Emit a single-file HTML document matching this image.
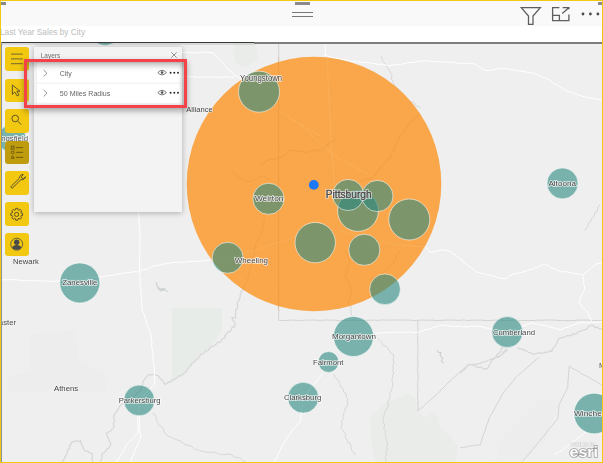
<!DOCTYPE html>
<html><head><meta charset="utf-8">
<style>
html,body{margin:0;padding:0;width:603px;height:463px;overflow:hidden;background:#f2c811;font-family:"Liberation Sans",sans-serif;}
#frame{position:absolute;left:1px;top:1px;width:601px;height:460.5px;background:#fafafa;overflow:hidden;}
#hdr{position:absolute;left:0;top:0;width:601px;height:25px;background:#f9f9f9;}
#title{position:absolute;left:0;top:25px;width:601px;height:16px;background:#fff;}
#title span{position:absolute;left:-1.5px;top:0.5px;font-size:9.2px;color:#bdbdbd;white-space:nowrap;transform-origin:0 0;transform:scaleX(0.9);}
#map{position:absolute;left:0;top:41px;width:601px;height:420px;background:#efefef;overflow:hidden;}
svg{position:absolute;left:0;top:0;}
.btn{position:absolute;left:4px;width:23.5px;height:23.5px;background:#f2c811;border-radius:3px;}
#panel{position:absolute;left:33px;top:46px;width:148px;height:164px;background:#f3f3f3;box-shadow:0 1px 6px rgba(0,0,0,.28);}
.row{position:absolute;left:3px;width:143px;height:19.5px;background:#fff;}
.row span{position:absolute;left:23px;top:5px;font-size:7.5px;color:#555;white-space:nowrap;}
#red{position:absolute;left:23px;top:58px;width:157px;height:43px;border:3px solid #f4424a;box-shadow:0 3px 6px rgba(0,0,0,.32), inset 0 3px 6px rgba(0,0,0,.3);}
.lbl{position:absolute;font-size:8px;color:#555;white-space:nowrap;text-shadow:0 0 1px #fff,0 0 1px #fff,0 0 2px #fff;transform:translate(-50%,-50%);}
</style></head><body>
<div id="frame">
  <div id="hdr">
    <div style="position:absolute;left:0;top:1px;width:5px;height:3px;background:#8a8a8a"></div>
    <div style="position:absolute;left:294px;top:1px;width:15px;height:3px;background:#8a8a8a"></div>
    <div style="position:absolute;left:291px;top:11px;width:21px;height:1px;background:#777"></div>
    <div style="position:absolute;left:291px;top:15px;width:21px;height:1px;background:#777"></div>
    <div style="position:absolute;left:597px;top:1px;width:4px;height:3px;background:#8a8a8a"></div>
  </div>
  
<svg style="position:absolute;left:0;top:0" width="603" height="42" viewBox="1 1 603 42">
  <path d="M521.3,7.6 L540.3,7.6 L533,16 L533,24.3 L528.5,24.3 L528.5,16 Z" fill="none" stroke="#5e5e5e" stroke-width="1.3" stroke-linejoin="miter"/>
  <path d="M559.4,7.6 L552.6,7.6 L552.6,20.6 L568.9,20.6 L568.9,14.4 M562.6,7.6 L568.9,7.6 L568.9,9.2 M552.6,15.4 L559.4,15.4 L559.4,20.6 M562.2,13.6 L568.3,8.2" fill="none" stroke="#5e5e5e" stroke-width="1.3"/>
  <circle cx="583" cy="14" r="1.4" fill="#4a4a4a"/>
  <circle cx="590.4" cy="14" r="1.4" fill="#4a4a4a"/>
  <circle cx="597.9" cy="14" r="1.4" fill="#4a4a4a"/>
</svg>
<div id="title"><span>Last Year Sales by City</span></div>
</div>
<div id="map" style="left:1px;top:42px;width:601px;height:419.5px;">
  <svg width="601" height="420" viewBox="1 42 601 420">
    <!-- map details -->
    <g fill="#e7ebe7" stroke="none" opacity="0.8">
      <path d="M172,308 L222,308 L222,330 L212,346 L198,356 L184,372 L172,384 Z"/>
      <path d="M30,335 L75,330 L78,360 L108,375 L106,392 L80,392 L62,385 L40,392 L8,392 L8,378 L30,370 Z" opacity="0.6"/>
      <path d="M370,418 L378,410 L386,402 L400,398 L408,393 L415,398 L417,410 L425,418 L430,412 L437,416 L440,428 L450,436 L458,446 L456,463 L376,463 L372,448 Z" opacity="0.8"/>
      <path d="M500,440 L540,400 L560,400 L545,440 L520,463 L495,463 Z" opacity="0.6"/>
      <path d="M233,43 L256,43 L258,60 L245,68 L235,62 Z" opacity="0.8"/>
    </g>
<!--LINES-->
<path d="M156,282 L158,287 L161,289 L164,288 L166,290 L168,292 L165,290 L161,291 L158,289 Z" fill="#cfd3d3" stroke="#cfd3d3" stroke-width="0.8"/>
<path d="M437,350 L439,353 L441,352 L440,356 L443,358 L441,361 L444,363" fill="none" stroke="#c9cccc" stroke-width="1"/>
<g fill="none" stroke="#d3d3d3" stroke-width="1"><path d="M278.6,43.0 L278.7,46.0 L278.8,49.0 L278.5,52.0 L278.9,55.1 L278.6,58.1 L278.7,61.1 L278.9,64.1 L278.6,67.1 L278.9,70.1 L278.6,73.1 L278.9,76.2 L278.9,79.2 L278.7,82.2 L278.4,85.2 L278.9,88.2 L278.8,91.2 L278.5,94.2 L278.3,97.3 L278.5,100.3 L278.7,103.3 L278.3,106.3 L278.9,109.3 L278.3,112.3 L278.7,115.3 L278.8,118.4 L278.9,121.4 L278.7,124.4 L278.4,127.4 L278.8,130.4 L278.5,133.4 L278.5,136.4 L278.7,139.5 L278.6,142.5 L278.9,145.5 L278.9,148.5 L278.8,151.5 L278.5,154.5 L278.7,157.5 L278.7,160.6 L278.5,163.6 L278.6,166.6 L278.7,169.6 L278.4,172.6 L278.5,175.6 L278.8,178.6 L278.5,181.7 L278.6,184.7 L278.3,187.7 L278.4,190.7 L278.7,193.7 L278.3,196.7 L278.9,199.7 L278.7,202.7 L278.4,205.8 L278.8,208.8 L278.6,211.8 L278.9,214.8 L278.5,217.8 L278.4,220.8 L278.5,223.8 L278.3,226.9 L278.7,229.9 L278.5,232.9 L278.5,235.9 L278.5,238.9 L278.6,241.9 L278.4,244.9 L278.3,248.0 L278.6,251.0 L278.5,254.0 L278.9,257.0 L278.5,260.0 L278.5,263.0 L278.3,266.0 L278.4,269.1 L278.8,272.1 L278.7,275.1 L278.5,278.1 L278.9,281.1 L278.6,284.1 L278.8,287.1 L278.9,290.2 L278.9,293.2 L278.4,296.2 L278.9,299.2 L278.8,302.2 L278.7,305.2 L278.3,308.2 L278.9,311.3 L278.6,314.3 L278.6,317.3 L278.6,320.3 L281.6,320.6 L284.6,320.5 L287.6,320.6 L290.6,320.1 L293.6,320.2 L296.6,320.2 L299.6,320.6 L302.6,320.6 L305.6,320.1 L308.6,320.1 L311.6,320.1 L314.6,320.1 L317.6,320.3 L320.7,320.4 L323.7,320.1 L326.7,320.0 L329.7,320.2 L332.7,320.2 L335.7,320.3 L338.7,320.6 L341.7,320.4 L344.7,320.3 L347.7,320.4 L350.7,320.4 L353.7,320.0 L356.7,320.6 L359.7,320.5 L362.7,320.6 L365.7,320.5 L368.7,320.2 L371.7,320.2 L374.7,320.0 L377.7,320.4 L380.7,320.0 L383.7,320.0 L386.7,320.1 L389.7,320.1 L392.7,320.2 L395.7,320.0 L398.7,320.0 L401.8,320.1 L404.8,320.0 L407.8,320.2 L410.8,320.0 L413.8,320.6 L416.8,320.4 L419.8,320.1 L422.8,320.1 L425.8,320.2 L428.8,320.2 L431.8,320.0 L434.8,320.5 L437.8,320.6 L440.8,320.3 L443.8,320.3 L446.8,320.0 L449.8,320.0 L452.8,320.2 L455.8,320.1 L458.8,320.5 L461.8,320.1 L464.8,320.0 L467.8,320.6 L470.8,320.3 L473.8,320.1 L476.8,320.3 L479.8,320.0 L482.9,320.3 L485.9,320.6 L488.9,320.6 L491.9,320.4 L494.9,320.1 L497.9,320.2 L500.9,320.1 L503.9,320.5 L506.9,320.3 L509.9,320.5 L512.9,320.2 L515.9,320.1 L518.9,320.5 L521.9,320.6 L524.9,320.5 L527.9,320.5 L530.9,320.5 L533.9,320.5 L536.9,320.1 L539.9,320.3 L542.9,320.2 L545.9,320.0 L548.9,320.0 L551.9,320.1 L554.9,320.1 L557.9,320.4 L560.9,320.6 L564.0,320.3 L567.0,320.6 L570.0,320.6 L573.0,320.6 L576.0,320.2 L579.0,320.1 L582.0,320.1 L585.0,320.1 L588.0,320.1 L591.0,320.4 L594.0,320.6 L597.0,320.5 L600.0,320.3 L603.0,320.3"/><path d="M417.9,320.3 L417.8,323.3 L417.7,326.3 L418.2,329.4 L417.8,332.4 L417.6,335.4 L417.7,338.4 L417.7,341.5 L417.9,344.5 L418.1,347.5 L417.7,350.5 L418.0,353.6 L417.7,356.6 L417.6,359.6 L418.0,362.6 L418.0,365.6 L417.6,368.7 L417.7,371.7 L418.1,374.7 L418.2,377.7 L418.1,380.8 L417.6,383.8 L417.7,386.8 L418.1,389.8 L417.7,392.9 L417.6,395.9 L417.8,398.9 L418.0,401.9 L417.9,405.0 L418.2,408.0 L417.9,411.0 L420.1,408.6 L423.0,406.9 L425.2,404.6 L427.6,402.3 L430.2,400.4 L432.4,398.0 L435.0,396.0 L437.4,393.8 L439.7,391.5 L441.9,389.0 L444.3,386.7 L446.6,384.4 L449.0,382.0 L451.5,379.9 L453.8,377.5 L456.0,375.3 L458.5,373.3 L460.7,371.1 L463.4,369.4 L465.5,367.0 L467.9,365.0 L470.9,364.6 L474.0,364.3 L477.0,364.1 L480.0,363.4 L482.8,362.3 L485.8,361.6 L488.6,360.2 L491.4,359.2 L494.3,358.1 L497.0,356.7 L500.0,356.0 L502.6,354.0 L505.2,351.8 L508.0,350.0"/><path d="M569.1,365.9 L569.2,369.0 L568.5,372.0 L568.7,375.1 L568.3,378.2 L567.9,381.2 L567.9,384.3 L567.7,387.4 L566.4,390.3 L564.8,393.2 L563.4,396.0 L561.8,398.8 L560.8,401.9 L559.1,404.7 L558.7,408.3 L558.5,411.9 L558.1,415.4 L557.6,419.0 L555.4,421.4 L553.5,423.9 L551.4,426.4 L549.3,428.8 L547.2,431.2 L545.4,433.9 L543.3,436.3 L541.3,438.6 L539.5,441.1 L537.5,443.4 L535.5,445.7 L533.7,448.2 L531.8,450.6 L529.8,453.1 L527.8,455.6 L525.5,457.8 L523.6,460.4 L521.7,463.0"/><path d="M569.1,365.9 L571.6,367.7 L574.2,369.3 L577.0,370.4 L579.5,372.1 L582.0,373.9 L584.6,375.4 L587.5,376.5 L590.1,378.0 L592.6,379.8 L595.3,381.1 L597.9,382.8 L600.5,384.2 L603.0,386.0"/><path d="M539.0,357.3 L536.5,359.3 L534.1,361.3 L531.6,363.3 L529.6,365.8 L526.9,367.6 L524.5,369.7 L522.4,372.0 L519.6,373.7 L517.4,376.0 L515.1,378.2 L513.4,381.0 L511.0,383.2 L509.2,385.9 L507.1,388.3 L504.8,390.5 L503.0,393.2 L501.2,396.0 L500.0,399.0 L498.3,401.8 L496.6,404.7 L495.2,407.6 L493.7,410.5 L492.0,413.3 L490.2,416.1 L488.7,419.0 L488.1,422.0 L486.8,424.7 L485.9,427.6 L485.2,430.6 L484.0,433.4 L482.9,436.2 L482.0,439.1 L481.3,442.1 L480.1,444.9 L476.7,445.0 L473.4,445.6 L470.0,446.0 L466.7,447.0 L463.4,447.4 L460.0,447.7"/></g>
<g fill="none" stroke="#d8d8d8" stroke-width="1.3"><path d="M243.0,288.0 L243.0,290.2 L241.0,291.6 L241.1,293.8 L240.0,295.5 L240.1,297.8 L239.1,299.8 L237.7,301.7 L237.3,303.8 L237.7,306.2 L237.4,308.3 L235.5,310.1 L235.7,312.4 L235.5,315.2 L235.6,318.0 L232.0,317.6 L232.7,320.1 L234.7,322.0 L235.0,324.6 L234.3,326.7 L232.0,327.6 L231.1,329.5 L230.2,331.5 L227.6,332.0 L226.7,334.0 L225.1,335.4 L224.8,337.8 L222.4,338.5 L221.5,340.5 L220.2,342.3 L217.6,342.3 L216.3,344.1 L214.6,345.4 L212.7,346.3 L210.5,346.9 L209.4,349.1 L207.8,350.5 L205.6,351.0 L204.2,352.6 L202.5,354.0 L200.4,354.6 L199.5,356.5 L198.3,358.1 L196.7,359.4 L195.2,360.8 L193.9,362.3 L191.9,363.2 L191.2,365.3 L189.6,366.5 L188.6,368.4 L187.1,369.7 L186.2,371.6 L184.5,372.8 L182.8,374.0 L181.5,375.8 L179.1,375.7 L177.5,377.1 L176.0,378.7 L174.0,379.3 L171.8,379.6 L170.8,382.0 L168.4,381.9 L167.0,383.6 L165.2,384.5 L163.8,382.7 L162.9,380.6 L160.8,379.3 L159.6,377.5 L158.2,375.7 L156.0,375.1 L153.9,374.2 L151.6,375.1 L149.4,374.5 L147.5,375.5 L146.3,377.1 L145.0,378.7 L143.7,380.3 L143.1,382.3 L142.4,384.3 L142.1,386.4 L141.2,388.3 L140.5,390.3 L139.0,392.0 L137.1,392.8 L135.9,394.7 L134.4,396.0 L132.8,397.2 L130.3,397.3 L128.6,398.4 L127.2,399.8 L125.9,401.6 L124.3,402.8 L122.6,403.9 L120.7,404.7 L119.6,406.5 L118.9,408.5 L117.4,409.9 L116.5,411.8 L115.0,413.3 L114.0,415.3 L113.7,417.3 L114.3,419.5 L114.6,421.6 L113.1,423.5 L114.1,425.7 L113.5,427.7 L111.9,429.3 L110.5,431.3 L108.2,432.1 L106.3,433.4 L107.1,435.3 L107.7,437.3 L109.0,439.0 L109.2,441.1 L110.7,442.8 L110.6,445.0 L109.5,446.7 L108.3,448.4 L106.4,449.4 L105.5,451.3 L104.0,452.8 L102.0,453.6 L102.0,456.0 L101.8,458.4 L100.8,460.6 L100.6,463.0"/><path d="M61.8,463.0 L62.8,461.1 L64.0,459.4 L64.8,457.4 L65.8,455.5 L67.0,453.7 L67.1,451.5 L67.9,449.5 L69.9,448.1 L69.4,445.5 L71.3,444.1 L71.8,442.0 L74.0,441.9 L76.0,440.5 L78.4,441.5 L80.5,440.6 L80.7,442.9 L82.0,444.7 L82.7,446.8 L83.4,448.9 L84.8,450.7 L87.4,451.1 L89.6,452.7 L92.0,453.6 L92.3,456.0 L92.1,458.4 L92.5,460.7 L93.4,463.0"/><path d="M460.0,373.0 L461.8,372.0 L463.0,370.3 L464.8,369.3 L466.0,367.6 L467.4,366.2 L468.6,364.5 L470.9,364.7 L473.2,365.1 L475.3,366.0 L477.2,367.3 L479.3,367.4 L481.3,367.2 L483.2,368.8 L485.3,368.6 L487.3,368.8 L488.6,366.8 L489.7,364.6 L490.8,362.5 L491.6,360.2 L493.7,359.1 L495.5,357.2 L498.3,357.4 L500.2,355.8 L501.9,354.5 L502.9,352.7 L504.3,351.2 L505.9,349.7 L507.0,348.0"/><path d="M504.5,345.0 L503.9,347.1 L501.7,348.1 L501.1,350.3 L500.1,352.1 L498.6,353.6 L496.7,354.8 L496.2,357.0 L494.2,358.1 L493.3,360.0"/><path d="M517.4,347.2 L519.0,348.8 L521.2,348.8 L523.2,349.4 L525.1,350.4 L526.9,351.5 L528.7,352.4 L530.8,353.0 L532.7,353.8 L534.7,354.4 L536.7,353.3 L538.9,353.0 L541.1,352.9 L543.4,353.4 L545.4,352.2 L547.6,352.3 L549.6,351.0 L551.9,351.5 L552.2,349.3 L553.6,347.6 L555.2,346.1 L556.3,344.3 L557.2,342.4 L557.7,340.3 L559.0,338.6 L561.0,338.0 L563.0,337.4 L565.0,336.8 L566.9,335.6 L569.1,335.7 L571.3,335.6 L572.7,333.8 L575.2,334.4 L577.0,333.6 L578.4,331.3 L580.6,331.4 L582.4,330.3 L584.5,329.9 L586.5,329.1 L587.8,327.3 L589.5,326.0 L591.5,325.4 L593.6,325.7 L595.0,327.7 L597.4,327.2 L599.1,328.6 L601.3,328.6 L603.0,330.0"/></g>
<g fill="none" stroke="#d2d2d2" stroke-width="0.8"><path d="M585.0,230.0 L586.2,228.0 L588.1,226.5 L587.9,223.6 L590.2,222.3 L590.8,220.0 L592.0,218.0 L593.8,216.5 L594.6,214.5 L595.0,212.1 L597.2,211.0 L597.7,208.7 L598.0,206.4 L600.0,205.0"/><path d="M419.0,114.0 L418.3,116.3 L416.2,117.2 L414.9,118.9 L413.7,120.7 L412.5,122.5 L410.8,123.8 L409.5,125.4 L407.3,126.4 L407.1,129.1 L405.0,130.0 L403.4,131.4 L402.1,132.9 L402.1,135.4 L399.6,136.2 L398.8,138.1 L398.0,140.0 L396.4,141.5 L396.7,143.9 L395.8,145.7 L394.9,147.5 L393.0,148.9 L392.9,151.1 L392.5,153.1 L391.6,154.9 L390.6,156.7 L389.4,158.6 L388.2,160.5 L386.6,162.1 L384.1,162.7 L383.3,165.1 L380.9,165.8 L380.0,168.0 L379.1,169.9 L377.9,171.6 L376.2,172.9 L375.5,174.9 L374.0,176.3 L372.5,177.8 L370.1,177.6 L368.1,178.5 L366.1,179.3 L364.1,180.4 L361.8,180.5 L360.0,182.0"/><path d="M260.0,166.7 L262.2,166.0 L263.3,164.1 L265.1,163.0 L265.8,160.6 L268.0,160.0 L270.1,160.1 L272.0,159.2 L274.1,159.5 L276.0,159.0 L277.9,157.9 L280.0,158.0 L281.2,156.1 L283.9,156.4 L284.7,154.0 L286.8,153.4 L288.4,152.0 L290.1,150.8 L292.0,150.0 L294.1,150.8 L296.2,151.6 L298.6,150.5 L300.6,151.6 L302.9,151.3 L305.0,152.0 L307.2,151.8 L309.3,151.2 L311.3,150.5 L313.5,150.2 L315.6,150.0 L318.0,151.1 L320.0,150.0 L321.7,148.9 L323.0,147.3 L325.5,147.3 L327.2,146.4 L328.3,144.4 L329.6,142.7 L331.3,141.7 L332.9,140.4 L335.0,140.0"/><path d="M336.0,105.0 L338.2,106.2 L340.0,108.0 L341.2,106.0 L343.0,104.9 L345.0,104.0"/><path d="M380.4,55.6 L381.8,57.1 L382.3,59.1 L382.8,61.2 L384.0,62.8 L385.6,64.2 L386.6,66.0 L387.4,67.8 L388.7,69.4 L389.8,71.1 L390.5,73.0 L391.8,74.8 L391.9,76.9 L391.1,79.2 L393.2,80.8 L393.0,83.0 L394.4,84.7 L395.6,86.5 L396.6,88.5 L399.0,89.3 L400.3,91.0 L401.7,92.7 L402.9,94.5 L404.2,96.3 L405.5,98.0 L406.7,99.9 L408.5,100.8 L410.1,102.0 L412.7,101.6 L414.4,102.8 L415.3,105.0 L416.8,106.4 L419.0,106.8 L420.6,108.0"/><path d="M153.0,412.7 L153.8,414.5 L155.9,415.7 L156.2,417.9 L156.3,420.2 L157.4,421.8 L158.4,423.6 L159.2,425.5 L161.4,426.5 L162.7,428.1 L163.6,429.9 L164.0,432.1 L165.0,433.8 L166.7,435.1 L168.3,436.4 L170.3,437.0 L172.2,437.8 L174.0,438.9 L176.1,439.3 L177.8,440.4 L180.2,440.4 L181.3,442.6 L183.7,442.6 L184.9,444.7 L187.0,445.2 L189.1,445.5 L191.1,446.1 L192.9,447.3 L194.4,448.9 L196.1,449.9 L198.5,449.8 L200.0,451.4 L202.1,450.8 L204.0,451.9 L206.0,452.2 L208.0,452.1 L210.1,452.0 L212.0,453.0 L214.1,452.0 L216.0,452.8 L218.0,453.3 L219.9,454.6 L222.0,454.2 L223.9,454.9 L226.0,454.3 L228.1,454.0 L230.1,454.3 L232.0,455.0 L233.6,456.8 L235.8,457.4 L238.2,457.7 L240.4,458.1 L242.0,460.0 L243.8,461.3 L246.0,462.0"/><path d="M378.0,338.7 L379.6,340.2 L381.3,341.5 L382.1,343.6 L383.2,345.6 L385.7,346.2 L387.4,347.5 L388.4,349.5 L389.8,351.2 L390.8,353.1 L393.0,354.0 L394.0,356.0 L393.3,358.0 L393.3,360.0 L393.6,362.0 L394.1,364.0 L392.4,365.9 L393.6,368.0 L392.5,370.0 L393.5,372.0 L393.4,374.0 L392.2,376.0 L393.0,378.0 L391.6,379.9 L392.4,382.0 L392.9,384.0 L392.7,386.0 L392.0,388.0 L391.6,390.0 L390.6,391.9 L389.5,393.7 L390.5,396.1 L389.5,398.0 L389.3,400.0 L387.3,401.6 L388.4,404.0 L388.0,406.1 L387.5,408.0 L386.3,409.8 L384.8,411.6 L384.3,413.6 L384.0,415.6 L383.0,417.5 L383.4,419.7 L382.8,421.8 L384.3,423.7 L384.8,425.7 L383.6,427.9 L384.2,429.8 L385.9,431.7 L384.9,433.8 L385.7,435.8 L386.0,437.8 L386.3,439.8 L386.9,441.8 L387.5,443.7 L387.2,445.8 L387.0,447.9 L387.0,450.1 L385.5,452.1 L386.9,454.5 L384.9,456.4 L386.2,458.8 L385.6,460.9 L385.0,463.0"/><path d="M334.0,374.0 L334.4,376.1 L335.4,377.8 L337.1,379.2 L338.8,380.6 L339.0,382.8 L340.2,384.4 L340.3,386.7 L342.5,387.8 L343.2,389.7 L343.3,392.0 L345.8,392.9 L346.2,395.0 L346.5,397.2 L348.0,398.6 L347.0,400.5 L347.9,402.8 L347.4,404.9 L346.8,406.9 L344.7,408.5 L345.5,410.8 L344.0,412.6 L343.2,414.5 L343.8,416.8 L343.4,418.9 L341.6,420.5 L341.8,422.7 L342.0,424.9 L341.0,426.8 L341.5,428.9 L343.2,430.4 L344.2,432.2 L345.6,433.9 L345.2,436.4 L345.9,438.5 L347.3,440.1 L347.7,442.2 L350.3,443.3 L350.8,445.4 L351.3,447.5 L351.4,449.8 L352.3,451.6 L354.3,453.0 L355.0,455.0"/><path d="M352.0,316.0 L351.1,313.9 L351.1,311.6 L350.8,309.4 L351.2,307.0 L350.0,305.0 L348.4,303.0 L348.6,300.3 L347.4,298.1 L346.0,296.0 L347.4,294.0 L348.1,291.8 L348.6,289.5 L348.9,287.1 L350.0,285.0 L348.8,283.0 L348.1,280.8 L348.0,278.3 L345.9,276.6 L345.3,274.4 L345.0,272.0 L344.2,270.0 L342.1,268.8 L340.5,267.3 L340.0,265.0"/></g>
<g fill="none" stroke="#ffffff" stroke-width="1"><path d="M182.0,52.6 L184.6,52.2 L187.1,52.6 L189.7,52.4 L192.3,53.0 L194.8,52.9 L197.4,53.0 L200.0,52.4 L202.5,52.2 L205.1,52.2 L207.7,52.6 L210.2,52.8 L212.8,52.6 L214.7,54.6 L216.7,56.4 L218.5,58.5 L220.2,60.6 L222.0,62.6 L224.0,64.5 L225.8,66.7 L227.8,68.8 L229.9,70.7 L232.2,72.3 L234.0,74.6 L236.0,76.3 L238.5,77.4 L240.6,79.1 L242.9,80.4 L245.0,82.0"/><path d="M182.0,77.0 L184.6,77.2 L187.2,76.7 L189.8,76.8 L192.4,76.8 L195.0,76.7 L197.6,77.3 L200.2,77.1 L202.8,76.8 L205.4,76.9 L208.0,77.4 L210.6,77.0 L213.2,76.8 L215.8,77.3 L218.4,77.1 L221.0,77.4 L223.6,76.6 L226.2,77.0 L228.8,77.3 L231.4,77.3 L234.0,77.0"/><path d="M325.0,43.0 L324.6,45.5 L325.4,48.0 L325.2,50.6 L325.3,53.1 L325.0,55.6 L327.6,55.9 L330.0,57.1 L332.6,57.3 L335.0,58.2 L337.6,58.3 L340.1,59.3 L342.7,59.4 L345.2,59.8 L347.7,60.6 L350.2,61.1 L352.7,61.6 L355.3,61.1 L357.8,61.9 L360.3,62.2 L362.8,62.1 L365.3,62.5 L367.9,62.6 L370.4,63.0 L372.9,63.3 L375.4,63.9 L377.9,64.3 L380.5,64.2 L383.0,64.3 L385.5,64.9 L388.0,65.5 L390.5,65.6 L393.0,65.0 L395.5,64.7 L398.0,64.3 L400.6,64.4 L403.1,63.8 L405.5,63.1 L408.0,62.7 L410.6,62.6 L413.1,62.4 L415.6,62.0 L420.0,60.9 L422.7,61.1 L425.4,60.8 L428.1,60.9 L430.8,61.5 L433.5,61.4 L436.3,61.4 L439.0,61.5 L441.7,62.2 L444.4,61.7 L447.1,62.1 L449.8,62.1 L452.4,62.2 L454.9,62.5 L457.4,63.1 L460.0,63.4 L462.6,63.1 L465.1,63.1 L467.6,63.8 L470.2,63.6 L472.8,63.6 L475.3,64.3 L477.8,66.2 L480.7,67.4 L483.2,69.3 L486.0,70.7 L488.7,70.3 L491.5,70.4 L494.1,69.7 L496.8,69.1 L499.5,68.7 L502.3,68.9 L505.0,68.5 L507.5,69.0 L509.9,69.7 L512.5,69.4 L514.9,70.3 L517.5,70.5 L519.9,71.1 L522.5,71.2 L525.0,71.7 L527.4,72.3 L529.9,73.1 L532.5,72.8 L534.9,73.6 L537.5,74.7 L539.9,76.1 L542.4,77.3 L545.2,77.8 L547.7,79.2 L550.0,80.2 L551.7,82.2 L553.8,83.5 L556.2,84.5 L558.5,85.5 L560.2,87.5 L562.6,88.4 L564.7,89.8 L567.0,91.1 L569.5,91.7 L571.9,92.8 L574.5,93.2 L576.8,94.6 L579.4,95.1 L581.7,96.2 L584.4,96.6 L587.0,97.6 L589.6,98.1 L592.4,98.0 L595.1,98.6 L597.7,99.3 L600.3,99.9 L603.0,100.4"/><path d="M138.0,211.0 L138.4,213.7 L138.8,216.5 L139.0,219.2 L138.8,222.0 L138.9,224.8 L139.9,227.5 L139.7,230.3 L140.0,233.0 L139.7,235.6 L140.3,238.1 L139.6,240.7 L140.2,243.2 L139.7,245.8 L139.8,248.3 L139.7,250.9 L139.9,253.4 L139.8,256.0 L139.6,258.5 L139.7,261.1 L139.5,263.6 L139.6,266.2 L139.6,268.7 L139.5,271.3 L140.1,273.8 L139.7,276.4 L140.0,278.9 L140.4,281.5 L140.1,284.0 L140.2,286.6 L140.7,289.1 L141.1,291.7 L141.0,294.2 L141.5,296.7 L141.7,299.3 L141.6,301.9 L142.0,304.4 L141.9,306.9 L142.0,309.5 L142.9,312.1 L144.2,314.5 L144.6,317.2 L146.0,319.6 L146.3,322.3 L147.2,324.9 L148.3,327.4 L149.6,329.8 L150.1,332.5 L151.0,335.0 L151.4,337.5 L151.1,340.0 L152.1,342.5 L151.7,345.0 L151.8,347.5 L152.3,350.0 L152.5,352.5 L153.3,355.0 L152.9,357.5 L153.6,360.0 L153.4,362.5 L153.7,365.0 L154.6,367.5 L154.6,370.0 L154.3,372.9 L154.2,375.8 L155.0,378.7 L154.7,381.6 L154.6,384.5 L152.5,386.3 L150.9,388.6 L148.5,390.1 L146.9,392.4 L144.6,394.0 L143.1,396.4 L140.9,398.1 L139.0,400.0 L138.6,402.5 L139.2,405.1 L139.1,407.6 L138.8,410.2 L138.8,412.7 L139.2,415.4 L139.6,418.1 L139.7,420.8 L139.9,423.5 L139.4,426.2 L139.8,428.9 L139.8,431.6 L140.7,434.3 L140.6,437.0 L139.4,439.3 L139.0,441.9 L137.7,444.1 L136.6,446.4 L135.9,448.9 L134.5,451.1 L133.8,453.5 L132.8,455.9 L131.6,458.1 L131.3,460.8 L130.0,463.0"/><path d="M138.0,416.0 L137.6,418.9 L137.9,421.8 L138.1,424.7 L137.7,427.6 L138.2,430.5 L138.0,433.4 L135.8,435.0 L134.1,437.2 L132.3,439.3 L130.1,441.0 L128.4,443.1 L126.4,445.0 L125.4,447.4 L123.7,449.4 L123.0,451.9 L121.1,453.9 L120.3,456.4 L118.8,458.4 L117.3,460.5 L116.4,463.0"/><path d="M2.0,279.6 L4.5,279.8 L7.0,279.9 L9.6,279.7 L12.1,279.6 L14.6,279.7 L17.2,279.9 L19.7,280.4 L22.2,280.3 L24.7,280.5 L27.2,281.0 L29.8,280.4 L32.3,280.6 L34.8,281.0 L37.4,280.6 L39.9,280.7 L42.4,281.1 L45.0,280.9 L47.5,281.3 L50.0,281.5 L52.5,281.1 L55.0,281.3 L57.5,281.2 L60.0,281.0 L62.5,280.5 L65.0,280.6 L67.5,280.2 L70.0,279.7 L72.5,280.1 L75.0,279.3 L77.5,278.9 L80.0,278.6 L82.5,278.9 L85.0,278.8 L87.5,278.5 L90.0,277.9 L92.5,277.5 L95.0,277.1 L97.5,277.4 L100.0,277.0 L102.5,276.7 L105.0,276.1 L107.5,275.9 L110.0,275.4 L112.6,275.4 L115.0,274.8 L117.5,274.0 L120.1,274.2 L122.4,273.0 L125.0,273.0 L127.5,272.8 L130.0,272.4 L132.5,272.0 L135.0,271.6 L137.5,272.0 L140.0,271.5 L142.3,270.1 L145.0,269.5 L147.7,268.8 L150.0,267.4 L152.7,266.4 L155.6,265.7 L158.5,265.4 L161.3,264.6 L164.1,264.0 L166.9,263.2 L169.5,263.3 L172.0,262.5 L174.6,262.5 L177.1,262.3 L179.6,261.9 L182.3,262.5 L184.8,262.2 L187.4,261.9 L189.9,261.1 L192.5,261.7 L195.0,261.2 L197.6,261.3 L200.1,260.9 L202.7,261.0 L205.3,260.6 L207.8,260.3 L210.4,260.4"/><path d="M322.0,374.0 L320.7,376.2 L319.0,378.1 L317.6,380.3 L315.8,382.1 L313.9,383.9 L312.4,385.9 L310.7,387.8 L309.2,389.9 L307.9,392.1 L306.1,394.0 L304.6,396.0 L303.0,398.0 L302.5,400.7 L302.4,403.4 L302.4,406.2 L301.8,408.8 L301.2,411.5 L301.6,414.3 L300.7,417.0 L300.8,419.7 L299.6,422.1 L297.8,424.0 L296.3,426.2 L294.3,428.0 L292.6,430.0 L291.1,432.2 L289.9,434.6 L287.9,436.4 L286.7,438.8 L285.0,440.8 L284.0,443.4 L282.2,445.6 L281.2,448.1 L280.0,450.6 L278.8,453.1 L277.3,455.4 L276.5,458.1 L274.9,460.4 L274.0,463.0"/><path d="M375.0,333.0 L377.6,333.1 L380.1,333.1 L382.7,332.6 L385.3,332.8 L387.8,332.6 L390.4,332.4 L393.0,332.2 L395.5,332.1 L398.1,332.5 L400.7,332.0 L403.2,332.8 L405.8,332.1 L408.3,332.0 L410.9,332.0 L413.5,332.8 L416.0,332.3 L418.6,332.4 L421.1,331.2 L423.7,330.2 L426.4,329.4 L429.2,329.1 L431.8,328.1 L434.5,327.3 L437.1,326.5 L439.7,325.4 L442.4,325.1 L445.0,325.7 L447.6,325.7 L450.2,326.2 L452.9,326.3 L455.5,326.5 L458.2,325.9 L460.8,326.4 L463.4,326.8 L466.1,326.9 L468.7,326.9 L471.4,326.2 L474.1,326.4 L476.7,326.4 L479.4,326.3 L482.0,326.8 L484.4,327.6 L486.9,328.1 L489.5,328.5 L491.9,329.2 L494.5,329.5 L497.0,329.7 L499.6,330.1 L502.1,330.6 L504.5,331.7 L507.0,332.0 L509.5,330.8 L512.1,330.0 L514.7,329.1 L517.1,327.8 L519.7,327.1 L522.3,326.2 L525.0,325.6 L527.4,324.4 L530.0,323.4 L532.6,322.6 L535.0,323.6 L537.7,323.9 L540.2,324.8 L542.8,325.2 L545.4,325.4 L547.9,326.3 L550.4,327.0 L552.9,327.9 L555.5,328.2 L558.0,329.1 L560.6,329.6 L563.1,328.8 L565.4,327.6 L568.1,327.3 L570.3,325.8 L573.0,325.5 L575.3,324.1 L577.7,323.1 L580.3,322.6 L582.8,322.3 L585.4,322.7 L587.9,322.8 L590.4,321.9 L592.9,322.3 L595.4,322.2 L598.0,322.4 L600.5,321.8 L603.0,322.0"/><path d="M425.4,246.8 L427.0,248.7 L428.8,250.6 L430.3,252.6 L433.3,252.2 L436.0,250.9 L439.1,250.8 L441.9,249.7 L445.0,250.2 L448.2,250.9 L451.2,251.9 L453.2,253.7 L455.4,255.2 L457.7,256.7 L459.6,258.7 L462.0,260.0 L463.7,262.2 L465.8,263.8 L467.9,265.5 L470.1,267.1 L472.4,268.5 L474.4,270.3 L476.5,272.0 L479.1,272.5 L481.5,273.6 L484.2,273.5 L486.6,274.9 L489.3,274.8 L491.8,275.6 L494.4,276.2 L496.8,277.4 L499.4,277.7 L502.0,278.3 L504.5,279.0 L507.5,277.7 L510.1,275.7 L513.0,274.3 L515.4,273.6 L517.9,273.1 L520.4,272.6 L522.9,272.0 L525.3,271.3 L527.7,270.4 L530.1,269.8 L532.6,269.3 L534.7,267.9 L537.2,267.3 L539.4,266.1 L541.7,265.0 L543.8,263.7 L546.3,264.6 L548.5,266.0 L550.7,267.4 L553.1,268.4 L555.6,269.2 L557.8,270.7 L560.3,271.1 L562.8,271.9 L565.4,271.7 L567.9,272.1 L570.4,272.6 L572.9,273.4 L575.4,273.9 L578.0,273.8 L580.5,274.2 L583.0,274.9 L584.9,273.1 L586.9,271.6 L589.0,270.1 L590.8,268.3 L592.9,266.8 L594.8,265.1 L597.0,263.7 L600.1,263.3 L603.0,262.0"/><path d="M583.0,275.0 L583.1,277.8 L584.0,280.6 L583.5,283.4 L584.6,286.2 L584.5,289.0 L583.7,291.4 L582.2,293.5 L581.5,295.9 L580.6,298.3 L579.9,300.7 L578.9,303.0 L581.1,305.1 L582.7,307.6 L585.0,309.5 L586.9,311.8 L588.7,314.2 L590.2,317.6 L591.5,321.0"/><path d="M555.0,455.0 L556.9,453.1 L559.2,451.8 L561.6,450.5 L563.7,448.9 L565.7,447.1 L567.9,445.7 L570.0,444.0 L572.0,442.5 L573.8,440.7 L576.1,439.6 L577.9,437.9 L580.1,436.7 L582.2,435.3 L584.0,433.4 L586.0,432.0"/><path d="M327.0,60.0 L327.1,62.5 L327.0,65.0 L327.5,67.5 L327.8,70.1 L327.5,72.6 L327.4,75.1 L327.7,77.6 L327.9,80.1 L327.9,82.7 L328.1,85.2 L328.3,87.7 L328.6,90.2 L328.9,92.7 L328.7,95.2 L329.3,97.7 L329.2,100.3 L329.0,102.8 L329.2,105.3 L329.4,107.8 L329.8,110.3 L329.8,112.8 L329.9,115.4 L329.9,117.9 L330.2,120.4 L330.1,122.9 L330.0,125.5 L330.8,127.9 L330.5,130.5 L330.5,133.0 L331.0,135.5 L331.1,138.0 L330.8,140.6 L331.7,143.0 L331.4,145.6 L331.9,148.1 L331.7,150.6 L331.7,153.2 L331.8,155.8 L332.4,158.4 L333.0,161.0 L332.8,163.6 L333.0,166.2 L333.1,168.8 L333.5,171.4 L333.6,174.0 L333.7,176.6 L334.2,179.2 L334.5,181.8 L334.2,184.4 L335.1,187.0 L334.9,189.6 L335.4,192.2 L335.3,194.8 L336.1,197.4 L336.0,200.0"/><path d="M300.0,125.0 L301.6,127.0 L303.9,128.2 L305.9,129.7 L307.7,131.5 L309.5,133.3 L311.7,134.7 L313.3,136.6 L315.2,138.3 L316.9,140.1 L319.0,141.6 L321.0,143.2 L322.9,144.8 L324.5,146.9 L326.3,148.7 L328.4,150.0 L330.5,151.5 L332.0,153.6 L334.2,155.0 L336.0,156.7 L338.4,157.7 L340.6,158.8 L342.6,160.5 L344.8,161.8 L347.1,162.8 L349.4,163.9 L351.6,165.2 L354.0,166.1 L355.9,167.9 L358.4,168.7 L360.5,170.1 L362.7,171.4 L364.9,172.6 L367.3,173.6 L369.5,174.8"/><path d="M280.0,112.0 L282.3,113.2 L284.4,114.7 L286.8,115.7 L288.7,117.5 L291.2,118.5 L293.2,120.2 L295.7,121.1 L297.8,122.5 L300.1,123.7 L302.3,125.2 L304.6,126.3 L306.9,127.5 L308.8,129.4 L311.2,130.3 L313.5,131.6 L315.6,133.0 L317.8,134.5 L320.0,135.8"/></g>
    <circle cx="314" cy="184" r="127.3" fill="#f99e37" fill-opacity="0.9"/>
    <!--INORANGE--><g fill="none" stroke="#d98e3c" stroke-opacity="0.3" stroke-width="0.9"><path d="M278.6,57 V311"/><path d="M265.0,217.0 L264.9,219.3 L263.9,221.3 L263.7,223.5 L262.8,225.6 L262.3,227.8 L262.0,230.0 L261.8,232.3 L260.9,234.3 L258.9,235.8 L258.8,238.2 L258.0,240.2 L256.7,242.0 L255.5,243.8 L255.8,246.0 L254.8,247.9 L254.9,250.0 L254.1,251.9 L254.4,254.1 L253.2,256.0 L252.4,257.9 L252.4,260.0 L252.0,262.0 L251.1,264.0 L250.6,266.2 L251.0,268.5 L249.4,270.3 L249.1,272.5 L249.0,274.7 L248.8,277.0 L247.0,278.7 L247.0,281.0 L246.0,283.3 L244.7,285.4 L243.4,287.5 L243.0,290.0"/><path d="M232.0,170.0 L233.4,171.8 L234.7,173.7 L236.9,174.7 L238.1,176.7 L240.0,178.0 L242.0,178.7 L243.7,180.2 L245.8,181.0 L248.2,180.6 L250.0,182.0 L251.7,180.5 L253.8,179.6 L256.3,179.7 L258.0,177.9 L260.1,177.2 L262.0,176.0 L264.1,176.7 L266.0,178.0 L268.1,178.8 L270.0,180.0"/><path d="M419.0,114.0 L417.8,115.8 L416.1,117.1 L414.7,118.7 L412.9,120.0 L411.8,121.8 L410.1,123.1 L408.8,124.8 L407.2,126.3 L406.2,128.2 L405.0,130.0 L404.3,132.0 L402.2,133.0 L400.9,134.6 L399.8,136.3 L399.1,138.3 L398.0,140.0 L396.9,141.7 L396.8,143.9 L395.0,145.4 L394.6,147.4 L394.2,149.4 L393.7,151.4 L391.7,152.8 L390.7,154.5 L390.6,156.7 L389.6,158.8 L387.2,159.6 L386.2,161.6 L385.0,163.5 L383.3,165.0 L381.2,166.1 L380.0,168.0 L378.3,169.3 L378.1,171.7 L376.1,172.8 L375.6,175.0 L373.5,176.0 L372.5,177.8 L370.5,178.8 L368.1,178.6 L366.0,179.2 L364.2,180.6 L361.8,180.5 L360.0,182.0"/><path d="M260.0,166.7 L261.4,165.1 L262.8,163.5 L264.9,162.8 L265.9,160.8 L268.0,160.0 L269.9,159.2 L272.0,159.2 L274.0,159.2 L275.9,158.1 L277.9,157.6 L280.0,158.0 L282.0,157.3 L283.3,155.5 L285.5,155.2 L287.2,154.0 L288.5,152.1 L290.3,151.1 L292.0,150.0 L294.2,150.4 L296.3,150.9 L298.5,151.2 L300.7,151.4 L302.8,151.9 L305.0,152.0 L307.2,152.4 L309.3,151.4 L311.4,151.0 L313.6,151.2 L315.7,150.2 L317.8,150.0 L320.0,150.0 L322.1,149.5 L323.4,147.8 L325.0,146.7 L326.2,144.9 L328.3,144.3 L330.1,143.4 L331.2,141.6 L333.4,141.3 L335.0,140.0"/><path d="M345.0,250.0 L345.6,252.1 L347.3,253.7 L347.3,256.1 L348.4,258.0 L348.9,260.1 L350.0,262.0 L349.4,264.3 L348.0,266.2 L347.1,268.4 L347.4,270.9 L346.5,273.1 L345.0,275.0 L345.6,277.0 L346.1,279.1 L348.0,280.5 L348.6,282.5 L349.2,284.4 L350.5,286.1 L351.3,288.0 L352.0,290.0 L351.7,292.2 L351.1,294.3 L350.1,296.4 L350.0,298.7 L349.3,300.8 L348.2,302.7 L348.0,305.0"/><path d="M400.0,250.0 L399.7,252.2 L397.9,253.7 L396.7,255.4 L396.3,257.6 L395.4,259.6 L393.6,261.0 L393.4,263.3 L392.0,265.0 L390.6,266.8 L388.6,267.9 L386.7,269.0 L385.6,271.2 L383.6,272.4 L381.9,273.8 L380.0,275.0 L377.8,275.5 L376.0,277.1 L373.7,277.5 L372.2,279.5 L370.0,280.0"/></g><g fill="none" stroke="#fbbf7a" stroke-opacity="0.35" stroke-width="0.9"><path d="M327.0,57.0 L327.3,59.5 L327.1,62.1 L327.1,64.6 L327.5,67.1 L327.9,69.6 L328.1,72.2 L327.9,74.7 L328.3,77.2 L327.9,79.8 L328.0,82.3 L328.7,84.8 L328.7,87.3 L328.4,89.9 L328.7,92.4 L328.7,95.0 L329.2,97.5 L329.5,100.0 L329.5,102.5 L329.2,105.1 L329.7,107.6 L329.8,110.1 L329.9,112.7 L330.0,115.2 L330.1,117.7 L329.8,120.3 L330.6,122.8 L330.8,125.3 L330.2,127.9 L330.4,130.4 L330.4,132.9 L331.0,135.4 L330.7,138.0 L330.9,140.5 L331.5,143.0 L331.2,145.6 L331.3,148.1 L331.7,150.6 L331.8,153.2 L332.1,155.8 L332.5,158.4 L332.7,161.0 L333.0,163.6 L333.4,166.2 L333.2,168.8 L333.7,171.4 L333.5,174.0 L334.3,176.6 L333.9,179.2 L334.3,181.8 L334.3,184.4 L334.6,187.0 L334.8,189.6 L335.3,192.2 L335.9,194.8 L335.6,197.4 L336.0,200.0"/><path d="M300.0,125.0 L302.1,126.5 L303.9,128.2 L305.6,130.1 L307.6,131.7 L309.5,133.3 L311.1,135.3 L313.2,136.7 L315.2,138.3 L317.2,139.9 L318.8,141.9 L320.9,143.3 L322.6,145.2 L324.7,146.6 L326.7,148.2 L328.4,150.0 L330.1,151.9 L332.4,153.2 L334.0,155.2 L336.0,156.7 L338.1,158.2 L340.4,159.3 L342.6,160.5 L345.1,161.2 L347.1,162.8 L349.3,164.2 L351.8,164.8 L354.0,166.2 L356.2,167.4 L358.3,168.8 L360.6,169.9 L362.8,171.2 L364.9,172.6 L367.5,173.2 L369.5,174.8"/><path d="M280.0,112.0 L282.4,113.0 L284.6,114.4 L286.8,115.7 L289.1,117.0 L290.9,118.9 L293.2,120.2 L295.7,121.0 L297.8,122.6 L300.1,123.8 L302.3,125.1 L304.5,126.4 L306.6,128.0 L308.9,129.2 L311.2,130.4 L313.5,131.6 L315.6,133.0 L317.9,134.2 L320.0,135.8"/><path d="M210.0,262.0 L212.5,261.5 L215.0,261.0 L217.5,260.2 L219.9,259.3 L222.4,258.8 L225.0,258.4 L227.5,258.0 L230.1,257.6 L232.5,256.7 L235.1,256.4 L237.5,255.7 L240.0,255.0 L242.5,254.1 L245.0,253.2 L247.5,252.5 L250.1,251.8 L252.5,250.8 L255.0,250.1 L257.5,249.1 L259.9,248.1 L262.5,247.5 L265.0,246.8 L267.4,245.5 L270.0,245.0 L272.5,244.1 L275.0,243.3 L277.6,242.8 L280.1,242.0 L282.5,240.7 L285.1,240.3 L287.6,239.4 L289.9,238.2 L292.5,237.5 L294.9,236.4 L297.6,236.1 L300.0,235.0"/><path d="M340.0,230.0 L342.5,231.0 L344.9,232.0 L347.4,232.7 L350.0,233.5 L352.4,234.3 L355.0,235.0 L357.6,235.5 L360.0,236.7 L362.6,237.1 L365.1,238.1 L367.4,239.4 L370.0,240.0 L372.6,240.1 L375.1,240.5 L377.6,240.9 L379.9,242.0 L382.5,241.8 L385.1,242.1 L387.5,243.2 L390.0,243.0 L392.5,244.0 L395.0,244.3 L397.5,244.8 L400.0,245.0 L402.5,245.6 L405.0,245.5 L407.5,245.8 L410.0,245.4 L412.5,246.2 L415.0,246.2 L417.5,246.6 L420.0,246.3 L422.5,247.0 L425.0,247.0"/></g>
    <g fill="#29887f" fill-opacity="0.6" stroke="#fff" stroke-opacity="0.7" stroke-width="0.8">
      <circle cx="259" cy="91.7" r="20.5"/>
      <circle cx="268.5" cy="198.8" r="15.6"/>
      <circle cx="358" cy="211" r="20.4"/>
      <circle cx="348.2" cy="195" r="15.6"/>
      <circle cx="377.4" cy="196" r="15.6"/>
      <circle cx="409.3" cy="219.5" r="20.5"/>
      <circle cx="315.2" cy="242.6" r="20.2"/>
      <circle cx="364.3" cy="249.8" r="15.6"/>
      <circle cx="227.7" cy="257.8" r="15.5"/>
      <circle cx="385" cy="289.3" r="15.4"/>
      <circle cx="562.5" cy="183.4" r="15.5"/>
      <circle cx="79.8" cy="282.9" r="20"/>
      <circle cx="353.5" cy="336.5" r="20"/>
      <circle cx="328.5" cy="362" r="10.4"/>
      <circle cx="139.2" cy="400.4" r="15.4"/>
      <circle cx="303.2" cy="397.7" r="15.4"/>
      <circle cx="507.3" cy="332" r="15.5"/>
      <circle cx="594.2" cy="413.5" r="20.3"/>
      <circle cx="105" cy="30" r="15.4"/>
      <circle cx="12" cy="138.5" r="14"/>
    </g>
    <circle cx="313.8" cy="184.9" r="4.9" fill="#1e78f6"/>
<g font-family="Liberation Sans, sans-serif" fill="#444">
<text x="240" y="80.9" font-size="8.2" textLength="42.2" lengthAdjust="spacingAndGlyphs" stroke="#fff" stroke-width="1.5" stroke-opacity="0.8" paint-order="stroke" stroke-linejoin="round">Youngstown</text>
<text x="186.2" y="112" font-size="7.6" textLength="26.6" lengthAdjust="spacingAndGlyphs" stroke="#f4f4f4" stroke-width="1" paint-order="stroke">Alliance</text>
<text x="254.9" y="201.2" font-size="8" textLength="28.5" lengthAdjust="spacingAndGlyphs" stroke="#fff" stroke-width="1.5" stroke-opacity="0.8" paint-order="stroke" stroke-linejoin="round">Weirton</text>
<text x="325.8" y="197.6" font-size="10" fill="#fff" stroke="#fff" stroke-width="1.8" stroke-opacity="0.75" textLength="45.8" lengthAdjust="spacingAndGlyphs">Pittsburgh</text><text x="325.8" y="197.6" font-size="10" fill="#464646" stroke="#464646" stroke-width="0.35" textLength="45.8" lengthAdjust="spacingAndGlyphs">Pittsburgh</text>
<text x="234.8" y="263.3" font-size="8" textLength="33.2" lengthAdjust="spacingAndGlyphs" stroke="#fff" stroke-width="1.5" stroke-opacity="0.8" paint-order="stroke" stroke-linejoin="round">Wheeling</text>
<text x="548.4" y="185.5" font-size="8" textLength="27.6" lengthAdjust="spacingAndGlyphs" stroke="#fff" stroke-width="1.5" stroke-opacity="0.8" paint-order="stroke" stroke-linejoin="round">Altoona</text>
<text x="62.3" y="284.8" font-size="8" textLength="35" lengthAdjust="spacingAndGlyphs" stroke="#fff" stroke-width="1.5" stroke-opacity="0.8" paint-order="stroke" stroke-linejoin="round">Zanesville</text>
<text x="13" y="263.8" font-size="7.4" textLength="25.8" lengthAdjust="spacingAndGlyphs" stroke="#f4f4f4" stroke-width="1" paint-order="stroke">Newark</text>
<text x="332" y="339.3" font-size="8" textLength="44" lengthAdjust="spacingAndGlyphs" stroke="#fff" stroke-width="1.5" stroke-opacity="0.8" paint-order="stroke" stroke-linejoin="round">Morgantown</text>
<text x="313" y="364.8" font-size="8" textLength="30.5" lengthAdjust="spacingAndGlyphs" stroke="#fff" stroke-width="1.5" stroke-opacity="0.8" paint-order="stroke" stroke-linejoin="round">Fairmont</text>
<text x="118.7" y="402.8" font-size="8" textLength="41.8" lengthAdjust="spacingAndGlyphs" stroke="#fff" stroke-width="1.5" stroke-opacity="0.8" paint-order="stroke" stroke-linejoin="round">Parkersburg</text>
<text x="283.9" y="400" font-size="8" textLength="37.4" lengthAdjust="spacingAndGlyphs" stroke="#fff" stroke-width="1.5" stroke-opacity="0.8" paint-order="stroke" stroke-linejoin="round">Clarksburg</text>
<text x="492.9" y="335.4" font-size="8" textLength="42.1" lengthAdjust="spacingAndGlyphs" stroke="#fff" stroke-width="1.5" stroke-opacity="0.8" paint-order="stroke" stroke-linejoin="round">Cumberland</text>
<text x="573.9" y="416.4" font-size="8" textLength="42" lengthAdjust="spacingAndGlyphs" stroke="#fff" stroke-width="1.5" stroke-opacity="0.8" paint-order="stroke" stroke-linejoin="round">Winchester</text>
<text x="54" y="390.8" font-size="7.6" textLength="24.2" lengthAdjust="spacingAndGlyphs" stroke="#f4f4f4" stroke-width="1" paint-order="stroke">Athens</text>
<text x="16.2" y="324.6" font-size="7.8" text-anchor="end" fill="#555">Lancaster</text>
<text x="599" y="368" font-size="7.8" fill="#555">M</text><text x="28" y="140.6" font-size="7.8" text-anchor="end" fill="#555" stroke="#fff" stroke-width="1.6" stroke-opacity="0.85" paint-order="stroke">ngsfield</text>
</g>
  </svg>
</div>

<svg style="position:absolute;left:0;top:0" width="603" height="463" viewBox="0 0 603 463">
  <g font-family="Liberation Sans, sans-serif" fill="#fff">
    <text x="569.5" y="457" font-size="15.5" font-weight="bold" textLength="28.5" lengthAdjust="spacingAndGlyphs" stroke="#7a7a7a" stroke-width="1.6" stroke-opacity="0.7" paint-order="stroke">esri</text>
    <text x="570" y="446" font-size="3.6" font-weight="bold" textLength="24" lengthAdjust="spacingAndGlyphs" stroke="#9a9a9a" stroke-width="0.6" stroke-opacity="0.6" paint-order="stroke">POWERED BY</text>
  </g>
</svg>
<div style="position:absolute;left:1px;top:42px;width:253px;height:1px;background:#383838"></div><div style="position:absolute;left:1px;top:43px;width:253px;height:1.5px;background:rgba(0,0,0,0.09)"></div><div style="position:absolute;left:254px;top:42px;width:348px;height:2px;background:#7d7d7d"></div>
<div style="position:absolute;left:1px;top:42px;width:1px;height:419.5px;background:#8a909c"></div>
<!-- buttons -->
<div class="btn" style="left:5px;top:47px"></div>
<div class="btn" style="left:5px;top:78.5px"></div>
<div class="btn" style="left:5px;top:109px"></div>
<div class="btn" style="left:5px;top:140.5px;background:#be9c0e"></div>
<div class="btn" style="left:5px;top:171px"></div>
<div class="btn" style="left:5px;top:202px"></div>
<div class="btn" style="left:5px;top:232.5px"></div>
<svg style="position:absolute;left:0;top:0" width="40" height="270" viewBox="0 0 40 270">
 <g stroke="#8a7a28" stroke-width="1.3" fill="none">
  <path d="M11,54.2 H22.7 M11,58.9 H22.7 M11,63.6 H22.7"/>
 </g>
 <g stroke="#625828" stroke-width="1" fill="none" stroke-linejoin="round">
  <path d="M12.4,85 L12.4,94.4 L14.8,92 L17.2,96 L19,95 L16.8,91.2 L20,91.2 Z"/>
  <circle cx="15.2" cy="118.5" r="3.3"/>
  <path d="M17.6,121 L21.2,124.6"/>
 </g>
 <g stroke="#6a5812" stroke-width="0.9" fill="none">
  <rect x="11.3" y="146.2" width="2.8" height="2.8"/>
  <circle cx="12.7" cy="152.4" r="1.4"/>
  <path d="M11.2,158.3 L12.7,155.8 L14.2,158.3 Z"/>
  <path d="M16,147.6 H23.2 M16,152.4 H23.2 M16,157.4 H23.2"/>
 </g>
 <g stroke="#5a5030" stroke-width="1" fill="none" stroke-linejoin="round">
  <path d="M11.3,186.2 L19.5,178 M12.8,187.7 L21,179.5 M11.3,186.2 A1.06,1.06 0 0 0 12.8,187.7 M19.5,178 A3.2,3.2 0 0 1 23.3,174.6 L21.4,176.5 L21.9,178.1 L23.5,178.6 L25.4,176.7 A3.2,3.2 0 0 1 21,179.5"/>
 </g>
 <g stroke="#5a5030" stroke-width="1" fill="none">
  <path d="M22.61,213.28 L22.61,215.32 L21.09,215.66 L20.77,216.45 L21.60,217.76 L20.16,219.20 L18.85,218.37 L18.06,218.69 L17.72,220.21 L15.68,220.21 L15.34,218.69 L14.55,218.37 L13.24,219.20 L11.80,217.76 L12.63,216.45 L12.31,215.66 L10.79,215.32 L10.79,213.28 L12.31,212.94 L12.63,212.15 L11.80,210.84 L13.24,209.40 L14.55,210.23 L15.34,209.91 L15.68,208.39 L17.72,208.39 L18.06,209.91 L18.85,210.23 L20.16,209.40 L21.60,210.84 L20.77,212.15 L21.09,212.94 Z" stroke-linejoin="round"/>
  <circle cx="16.6" cy="214.4" r="2.1"/>
 </g>
 <defs><clipPath id="pc"><circle cx="16.7" cy="244.2" r="5.6"/></clipPath></defs>
 <circle cx="16.7" cy="244.2" r="6" stroke="#4a4a4a" stroke-width="0.8" fill="none"/>
 <g clip-path="url(#pc)" fill="#4a4a4a"><circle cx="16.7" cy="242.3" r="2.7"/><ellipse cx="16.7" cy="249.4" rx="5.2" ry="4.3"/></g>
</svg>
<!-- panel -->
<div id="panel" style="left:34px;top:47px;height:164.5px">
  <svg style="position:absolute;left:0;top:0" width="148" height="70" viewBox="34 47 148 70">
    <g font-family="Liberation Sans, sans-serif" fill="#707070">
      <text x="40.7" y="58.2" font-size="7" textLength="19.6" lengthAdjust="spacingAndGlyphs">Layers</text>
    </g>
    <path d="M171.3,52.3 L176.7,57.7 M176.7,52.3 L171.3,57.7" stroke="#888" stroke-width="0.9"/>
    <rect x="37" y="63.2" width="143" height="19.4" fill="#fff"/>
    <rect x="37" y="84" width="143" height="19.2" fill="#fff"/>
    <g font-family="Liberation Sans, sans-serif" fill="#666">
      <text x="59.8" y="75.6" font-size="7.4" textLength="11.9" lengthAdjust="spacingAndGlyphs">City</text>
      <text x="59.8" y="95.6" font-size="7.4" textLength="50.6" lengthAdjust="spacingAndGlyphs">50 Miles Radius</text>
    </g>
    <path d="M43.6,70 L47,73.3 L43.6,76.6 M43.6,89.9 L47,93.2 L43.6,96.5" stroke="#888" stroke-width="0.9" fill="none"/>
    <g stroke="#555" stroke-width="0.8" fill="none">
      <path d="M157.8,72.6 Q162,68 166.4,72.6 Q162,77.2 157.8,72.6 Z"/>
      <path d="M157.8,92.6 Q162,88 166.4,92.6 Q162,97.2 157.8,92.6 Z"/>
    </g>
    <circle cx="162.1" cy="72.6" r="1.3" fill="#555"/>
    <circle cx="162.1" cy="92.6" r="1.3" fill="#555"/>
    <g fill="#222">
      <circle cx="170.6" cy="72.8" r="0.95"/><circle cx="174.3" cy="72.8" r="0.95"/><circle cx="178" cy="72.8" r="0.95"/>
      <circle cx="170.6" cy="92.8" r="0.95"/><circle cx="174.3" cy="92.8" r="0.95"/><circle cx="178" cy="92.8" r="0.95"/>
    </g>
  </svg>
</div>
<div id="red" style="left:24px;top:59px;width:156.5px;height:43px"></div>
</body></html>
